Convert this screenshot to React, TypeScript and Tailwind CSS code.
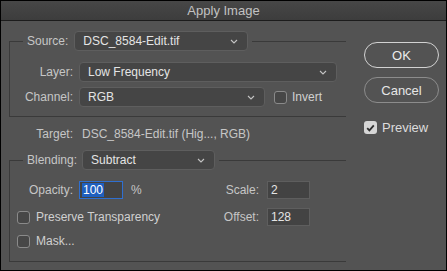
import React from "react"

function Chevron() {
	return (
		<svg width="8" height="5" viewBox="0 0 8 5" className="shrink-0">
			<path d="M1 1l3 3 3-3" fill="none" stroke="#c4c4c4" strokeWidth="1.1" />
		</svg>
	)
}

function Select({ value, width }: { value: string; width: string }) {
	return (
		<div
			className={`${width} h-[20px] flex items-center justify-between pl-[8px] pr-[9px] rounded-[4px] bg-[#454545] border border-[#5e5e5e] text-[#e4e4e4]`}
		>
			<span>{value}</span>
			<Chevron />
		</div>
	)
}

function Checkbox({ checked = false }: { checked?: boolean }) {
	if (checked) {
		return (
			<div className="w-[13px] h-[13px] rounded-[3px] bg-[#d6d6d6] flex items-center justify-center shrink-0">
				<svg width="9" height="8" viewBox="0 0 9 8">
					<path d="M1.2 4.2l2.2 2.2L7.8 1.4" fill="none" stroke="#2e2e2e" strokeWidth="1.8" />
				</svg>
			</div>
		)
	}
	return <div className="w-[13px] h-[13px] rounded-[3px] bg-[#474747] border border-[#8a8a8a] shrink-0" />
}

function NumField({ value, width }: { value: string; width: string }) {
	return (
		<div className={`${width} h-[18px] flex items-center pl-[3px] bg-[#434343] border border-[#5e5e5e] text-[#e4e4e4]`}>
			{value}
		</div>
	)
}

export default function App() {
	return (
		<div className="w-[447px] h-[271px] flex flex-col bg-[#535353] border border-black text-[12px] leading-none text-[#c6c6c6] font-['Liberation_Sans',Arial,sans-serif] overflow-hidden">
			{/* title bar */}
			<div className="h-[20px] shrink-0 flex items-center justify-center border-b border-[#1c1c1c] bg-gradient-to-b from-[#474747] to-[#3d3d3d] text-[13px] text-[#c2c2c2]">
				Apply Image
			</div>

			<div className="flex">
				<div className="ml-[8px] w-[337px]">
					{/* Source */}
					<fieldset className="mt-[10px] border-t border-l border-b border-[#3a3a3a]">
						<legend className="ml-[13px] px-[4px]">
							<div className="flex items-center">
								<span>Source:</span>
								<div className="ml-[6px]">
									<Select value="DSC_8584-Edit.tif" width="w-[174px]" />
								</div>
							</div>
						</legend>
						<div className="pt-[11px] pb-[9px] flex flex-col gap-[5px]">
							<div className="flex items-center">
								<span className="w-[63px] text-right">Layer:</span>
								<div className="ml-[6px]">
									<Select value="Low Frequency" width="w-[258px]" />
								</div>
							</div>
							<div className="flex items-center">
								<span className="w-[63px] text-right">Channel:</span>
								<div className="ml-[6px]">
									<Select value="RGB" width="w-[186px]" />
								</div>
								<div className="ml-[9px]">
									<Checkbox />
								</div>
								<span className="ml-[5px] text-[#d0d0d0]">Invert</span>
							</div>
						</div>
					</fieldset>

					{/* Target */}
					<div className="mt-[7px] h-[20px] flex items-center">
						<span className="ml-[1px] w-[63px] text-right">Target:</span>
						<span className="ml-[9px]">DSC_8584-Edit.tif (Hig..., RGB)</span>
					</div>

					{/* Blending */}
					<fieldset className="mt-[6px] border-t border-l border-b border-[#3a3a3a]">
						<legend className="ml-[13px] px-[4px]">
							<div className="flex items-center">
								<span>Blending:</span>
								<div className="ml-[5px]">
									<Select value="Subtract" width="w-[133px]" />
								</div>
							</div>
						</legend>
						<div className="pt-[11px] pb-[11px] flex flex-col">
							<div className="flex items-center h-[18px]">
								<div className="w-[190px] flex items-center">
									<span className="w-[63px] text-right">Opacity:</span>
									<div className="ml-[6px] w-[44px] h-[18px] flex items-center pl-[2px] bg-[#434343] border border-[#2f6fd0]">
										<span className="bg-[#1f5fbf] text-white px-[1px] h-[14px] flex items-center">100</span>
									</div>
									<span className="ml-[8px]">%</span>
								</div>
								<span className="w-[59px] text-right">Scale:</span>
								<div className="ml-[8px]">
									<NumField value="2" width="w-[43px]" />
								</div>
							</div>
							<div className="mt-[9px] flex items-center h-[18px]">
								<div className="w-[190px] flex items-center">
									<div className="ml-[7px]">
										<Checkbox />
									</div>
									<span className="ml-[6px] text-[#d0d0d0]">Preserve Transparency</span>
								</div>
								<span className="w-[59px] text-right">Offset:</span>
								<div className="ml-[8px]">
									<NumField value="128" width="w-[43px]" />
								</div>
							</div>
							<div className="mt-[6px] flex items-center h-[18px]">
								<div className="ml-[7px]">
									<Checkbox />
								</div>
								<span className="ml-[6px] text-[#d0d0d0]">Mask...</span>
							</div>
						</div>
					</fieldset>
				</div>

				{/* buttons */}
				<div className="ml-[18px] mt-[21px] flex flex-col">
					<button className="w-[75px] h-[26px] rounded-full border border-[#d2d2d2] text-[13px] text-[#ececec]">
						OK
					</button>
					<button className="mt-[9px] w-[75px] h-[26px] rounded-full border border-[#8c8c8c] text-[13px] text-[#e6e6e6]">
						Cancel
					</button>
					<div className="mt-[18px] flex items-center">
						<Checkbox checked />
						<span className="ml-[5px] text-[13px] text-[#dcdcdc]">Preview</span>
					</div>
				</div>
			</div>
		</div>
	)
}
